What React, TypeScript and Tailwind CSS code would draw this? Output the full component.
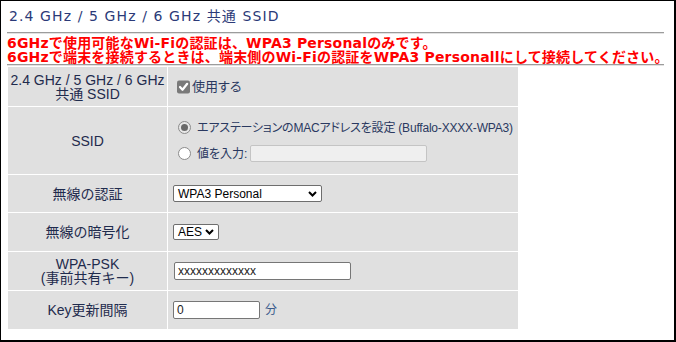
import React from "react";

const Chevron = () => (
  <svg width="9" height="6" viewBox="0 0 9 6" className="shrink-0">
    <path d="M1 1 L4.5 4.5 L8 1" stroke="#000" strokeWidth="2" fill="none" />
  </svg>
);

const Radio = ({ checked }: { checked?: boolean }) => (
  <svg width="13" height="13" viewBox="0 0 13 13" className="shrink-0">
    <circle cx="6.5" cy="6.5" r="6" fill={checked ? "#e8e8e8" : "#ffffff"} stroke="#8a8a8a" strokeWidth="1" />
    {checked && <circle cx="6.5" cy="6.5" r="3.5" fill="#6a6a6a" />}
  </svg>
);

const Check = () => (
  <svg width="13" height="14" viewBox="0 0 13 14" className="shrink-0">
    <rect x="0" y="0.5" width="13" height="13" rx="2" fill="#7a7a7a" />
    <path d="M3 7 L5.5 9.8 L10.2 3.8" stroke="#fff" strokeWidth="2.2" fill="none" strokeLinecap="round" strokeLinejoin="round" />
  </svg>
);

const label =
  "bg-[#e0e0e0] flex flex-col items-center justify-center text-center text-[14px] leading-[14px] text-[#1f2b4d] whitespace-nowrap";
const value =
  "bg-[#e0e0e0] flex items-center pl-[5px] text-[12px] text-[#2a3960] whitespace-nowrap [font-feature-settings:'palt']";

export default function App() {
  return (
    <div className="w-[676px] h-[342px] bg-white border-l border-t border-r-2 border-b-2 border-black overflow-hidden font-['Liberation_Sans','Noto_Sans_CJK_JP',sans-serif]">
      <div className="pl-[6px] pr-[10px]">
        <div className="h-[31px] pt-[5px] pl-[2px] text-[14px] leading-[20px] tracking-[1.1px] text-[#2b3a78] font-['DejaVu_Sans','Noto_Sans_CJK_JP',sans-serif] whitespace-nowrap">
          2.4 GHz / 5 GHz / 6 GHz 共通 SSID
        </div>
        <div className="h-px bg-[#9c9c9c]" />
        <div className="h-px bg-[#e2e2e2]" />
        <div className="pt-[2px] text-[14px] leading-[14px] font-bold text-[#ff0000] tracking-[0.18px] font-['DejaVu_Sans','Noto_Sans_CJK_JP',sans-serif] whitespace-nowrap">
          <div>6GHzで使用可能なWi-Fiの認証は、WPA3 Personalのみです。</div>
          <div>6GHzで端末を接続するときは、端末側のWi-Fiの認証をWPA3 Personallにして接続してください。</div>
        </div>
        <div className="h-px bg-[#9c9c9c]" />
        <div className="h-px bg-[#e2e2e2]" />
        <div className="mt-[1px] ml-[1px] w-[510px] grid grid-cols-[159px_350px] grid-rows-[39px_67px_37px_38px_38px_38px] gap-[1px] bg-white">
          <div className={label}>
            <div>2.4 GHz / 5 GHz / 6 GHz</div>
            <div>共通 SSID</div>
          </div>
          <div className={value}>
            <div className="ml-[4px] flex items-center gap-[2px]">
              <Check />
              <span className="text-[13px]">使用する</span>
            </div>
          </div>

          <div className={label}>SSID</div>
          <div className={value}>
            <div className="ml-[5px] flex flex-col gap-[8px]">
              <div className="h-[18px] flex items-center">
                <Radio checked />
                <span className="ml-[6px] tracking-[-0.2px]">エアステーションのMACアドレスを設定 (Buffalo-XXXX-WPA3)</span>
              </div>
              <div className="h-[18px] flex items-center">
                <Radio />
                <span className="ml-[6px]">値を入力:</span>
                <div className="ml-[3px] w-[177px] h-[17px] bg-[#efefef] border border-[#c4c4c4] rounded-[2px]" />
              </div>
            </div>
          </div>

          <div className={label}>無線の認証</div>
          <div className={value}>
            <div className="w-[149px] h-[17px] bg-white border border-[#6e6e6e] rounded-[2px] flex items-center justify-between pl-[4px] pr-[4px] text-[12px] text-black">
              <span>WPA3 Personal</span>
              <Chevron />
            </div>
          </div>

          <div className={label}>無線の暗号化</div>
          <div className={value}>
            <div className="w-[46px] h-[16px] bg-white border border-[#6e6e6e] rounded-[2px] flex items-center justify-between pl-[4px] pr-[4px] text-[12px] text-black">
              <span>AES</span>
              <Chevron />
            </div>
          </div>

          <div className={label}>
            <div>WPA-PSK</div>
            <div>(事前共有キー)</div>
          </div>
          <div className={value}>
            <div className="ml-[1px] w-[177px] h-[18px] bg-white border border-[#767676] rounded-[2px] flex items-center pl-[3px] text-[12px] text-[#222]">
              xxxxxxxxxxxxx
            </div>
          </div>

          <div className={label}>Key更新間隔</div>
          <div className={value}>
            <div className="w-[87px] h-[18px] bg-white border border-[#767676] rounded-[2px] flex items-center pl-[3px] text-[12px] text-[#222]">
              0
            </div>
            <span className="ml-[5px] text-[#3b5b8c]">分</span>
          </div>
        </div>
      </div>
    </div>
  );
}
